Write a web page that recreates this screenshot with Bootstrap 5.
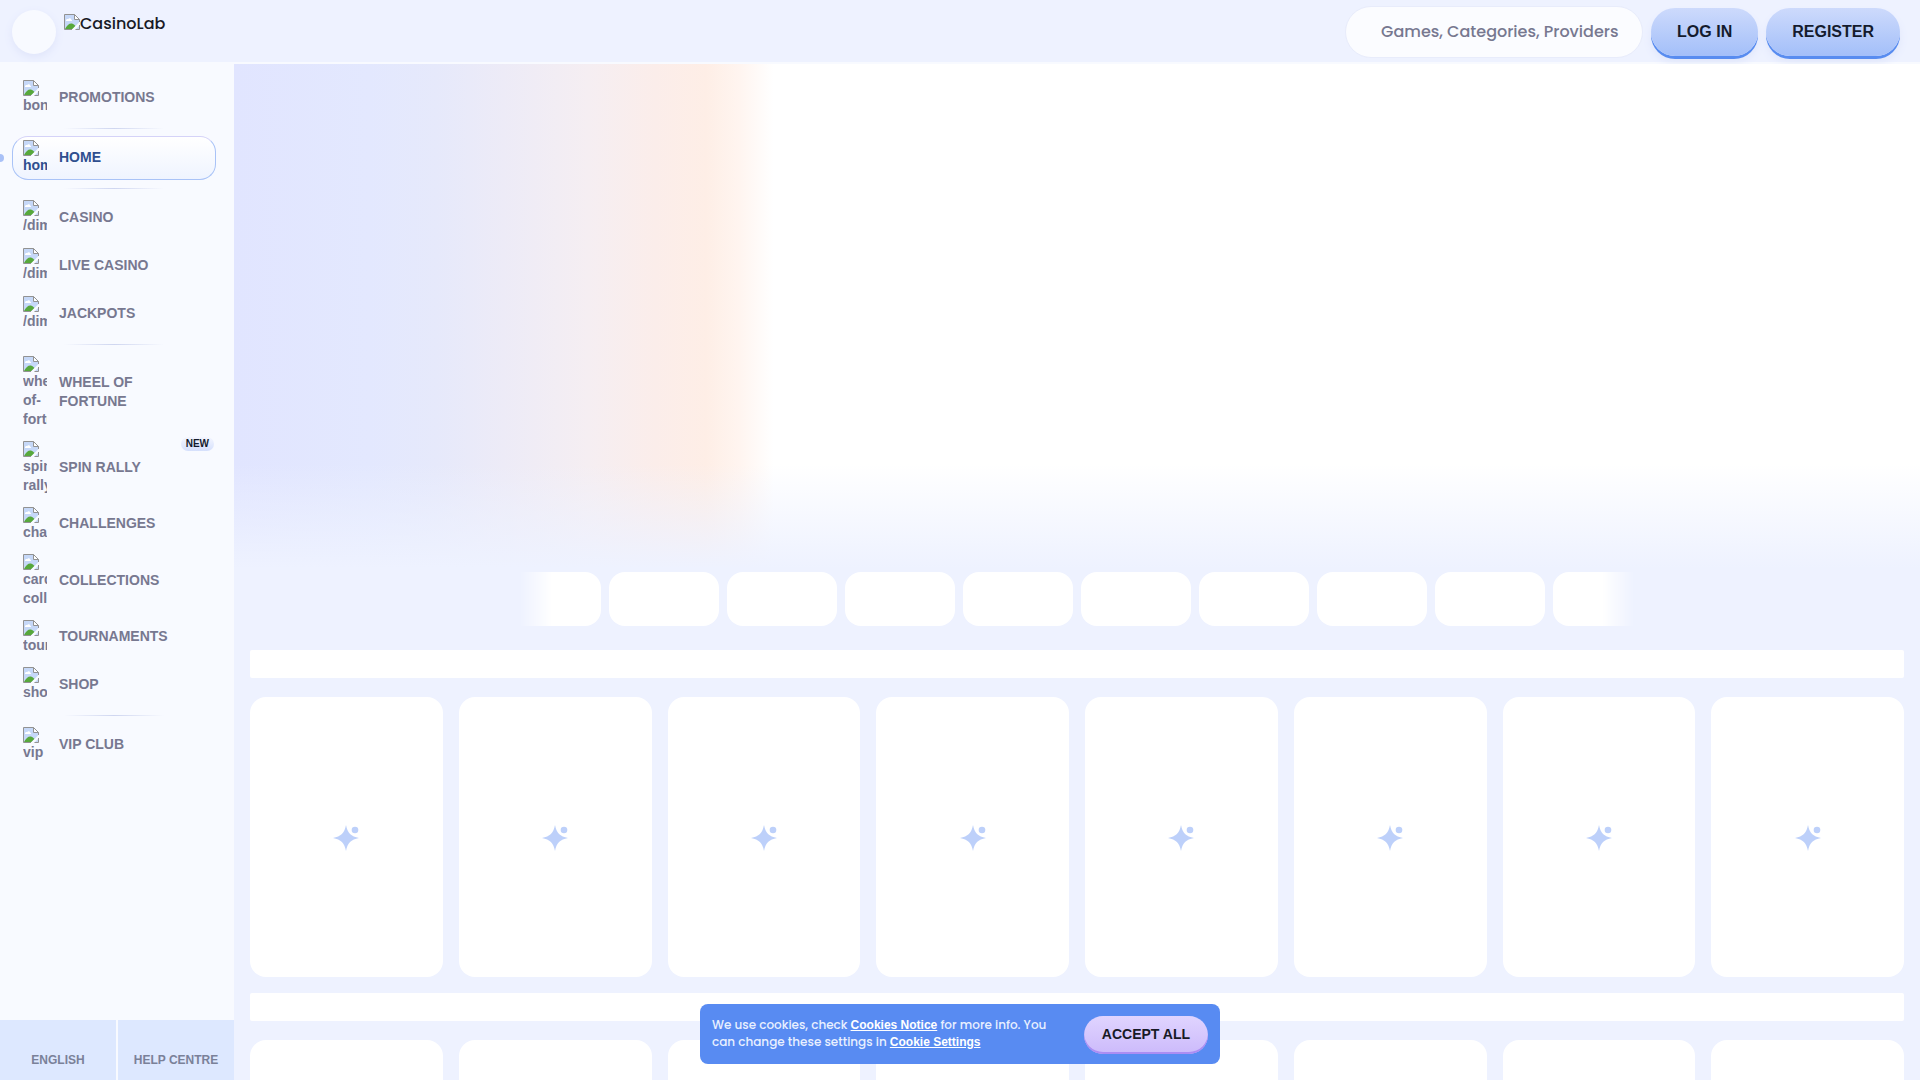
<!DOCTYPE html>
<html lang="en">
<head>
<meta charset="utf-8">
<meta name="viewport" content="width=device-width, initial-scale=1">
<title>CasinoLab</title>
<link rel="stylesheet" href="https://cdn.jsdelivr.net/npm/bootstrap@5.3.0/dist/css/bootstrap.min.css">
<style>
  :root { --geo: Poppins, Inter, "Open Sans", sans-serif; --page: #eef2ff; --muted: #777890; --ink: #181a26; }
  body { background: var(--page); color: var(--ink); font-family: "Liberation Sans", Arial, sans-serif; }
  .topbar { background: var(--page); border-bottom: 2px solid #f8faff; padding: 7px 20px 5px 12px; height: 64px; }
  .menu-btn { width: 44px; height: 44px; border-radius: 50%; border: 0; background: #f8faff; box-shadow: 0 3px 8px #dfe4fa; }
  .brand { font: 500 16px/20px var(--geo); color: var(--ink); text-decoration: none; padding-bottom: 16px; }
  .search-box { width: 298px; height: 52px; border: 1px solid #e8ecfb; border-radius: 26px; background: #fbfcff; padding: 0 16px 2px 35px; font: 500 16px/24px var(--geo); color: var(--muted); }
  .search-box::placeholder { color: var(--muted); opacity: 1; }
  .pill-btn { height: 48px; border: 0; border-radius: 25px; padding: 0 26px; font-weight: 700; font-size: 16px; color: #141b2d; background: linear-gradient(#cddafc, #a3bff9); box-shadow: 0 3px 0 #588cf0, 0 6px 8px #dfe5fa; }
  .sidebar { width: 234px; background: #f8faff; }
  .side-nav { padding: 12px 18px 0 12px; }
  .side-item { min-height: 44px; padding: 4px 11px; border-radius: 16px; color: var(--muted); font-weight: 700; font-size: 14px; line-height: 19px; text-decoration: none; margin-bottom: 4px; }
  .side-item.compact { min-height: 43px; }
  .side-item.current { color: #2f4f8f; border: 1px solid #a9c3f7; border-top-color: #d5d3f8; padding: 3px 10px; background: linear-gradient(#fff, #eff4ff); }
  .side-item.current::before { content: ""; position: absolute; left: -17px; top: 17px; width: 8px; height: 8px; border-radius: 50%; background: #a9c1f7; }
  .thumb { width: 24px; overflow: hidden; align-self: flex-start; }
  .thumb svg { display: block; }
  .side-label { width: 110px; padding-bottom: 2px; }
  .side-rule { height: 1px; margin: 4px 52px 7px; background: linear-gradient(90deg, transparent, #cfd6f0, transparent); }
  .new-tag { position: absolute; right: 2px; top: 0; font-size: 10px; line-height: 14px; padding: 0 5px; border-radius: 7px; color: #141b2d; background: linear-gradient(#f4f6ff, #d5e0fc); }
  .foot-row { gap: 2px; }
  .foot-link { flex: 1 1 0; height: 60px; padding: 30px 0 10px; background: #dde8ff; color: #7a8199; font-weight: 700; font-size: 12px; line-height: 20px; text-align: center; border: 0; text-decoration: none; }
  .hero { height: 508px; background: linear-gradient(transparent 400px, var(--page) 504px), linear-gradient(90deg, #e1e5ff 0, #e3e8fe 8%, #e6e9fb 12%, #edebf7 16%, #f5eef2 21%, #fbedea 25%, #feeee6 28%, #fff5f0 30%, #fff 32%); }
  .chips { width: 1116px; max-width: 100%; -webkit-mask-image: linear-gradient(90deg, transparent, #000 34px, #000 calc(100% - 34px), transparent); mask-image: linear-gradient(90deg, transparent, #000 34px, #000 calc(100% - 34px), transparent); }
  .chip { flex: 0 0 110px; height: 54px; border-radius: 16px; background: #fff; }
  .shelf-title { height: 28px; border-radius: 2px; background: #fff; margin-bottom: 19px; }
  .tiles { display: grid; grid-template-columns: repeat(8, 1fr); gap: 16px; margin-bottom: 16px; }
  .tile { height: 280px; border-radius: 16px; background: #fff; padding-top: 2px; }
  .cookie-bar { width: 520px; left: 50%; transform: translateX(-50%); bottom: 16px; min-height: 60px; border-radius: 8px; background: #588bf2; color: #e9f0ff; padding: 12px 12px 10px; z-index: 5; }
  .cookie-text { width: 346px; font: 500 12px/17px var(--geo); }
  .cookie-text a { color: #fff; font: 700 12px/12px "Liberation Sans", sans-serif; }
  .accept-btn { border: 0; border-radius: 20px; height: 38px; padding: 0 18px 2px; font-size: 14px; font-weight: 700; color: var(--ink); background: linear-gradient(#e0d4ff, #ccbafb); box-shadow: inset 0 -2px 0 #ab8df3; white-space: nowrap; }
</style>
<script src="https://cdn.jsdelivr.net/npm/bootstrap@5.3.0/dist/js/bootstrap.bundle.min.js"></script>
</head>
<body class="vh-100 overflow-hidden d-flex flex-column">
<svg width="0" height="0" class="position-absolute" aria-hidden="true">
  <symbol id="missing" viewBox="0 0 16 16">
    <path d="M.5.5h10l5 5v10H.5z" fill="#c6d8f8"/>
    <path d="M2 6.500c0-1.500 1.500-2 2.200-1.300C4.700 3.700 7 4 7 5.500c1 0 1.200 1 .8 1.500H2z" fill="#fff"/>
    <path d="M1 15c2-4 4.500-6 7-5.500 1.500.3 2.500 1.500 3.500 2.500L8.500 15z" fill="#57a83c"/>
    <path d="M16 7.500 7.500 16H11l5-5z" fill="#f8faff"/>
    <path d="M.5 15.500V.5h10l5 5V8M11.500 15.500h4V11M.5 15.500H8" fill="none" stroke="#929292"/>
    <path d="M10.500.5v5h5z" fill="#fff" stroke="#929292"/>
  </symbol>
  <symbol id="spark" viewBox="0 0 28 28">
    <path d="M14 1c1.500 8 5 11.500 13 13-8 1.500-11.500 5-13 13-1.500-8-5-11.500-13-13 8-1.500 11.500-5 13-13z" fill="#bdd0fa"/>
    <circle cx="23" cy="6" r="3.300" fill="#bdd0fa"/>
  </symbol>
</svg>

<header class="topbar d-flex align-items-center gap-2 flex-shrink-0">
  <button class="menu-btn" type="button" aria-label="Menu"></button>
  <a class="brand d-flex" href="#"><svg width="16" height="16"><use href="#missing"/></svg>CasinoLab</a>
  <input class="search-box ms-auto" type="text" placeholder="Games, Categories, Providers" aria-label="Search">
  <button class="pill-btn" type="button">LOG IN</button>
  <button class="pill-btn" type="button">REGISTER</button>
</header>

<div class="d-flex flex-grow-1 overflow-hidden">
  <aside class="sidebar d-flex flex-column flex-shrink-0">
    <nav class="side-nav d-flex flex-column flex-grow-1">
      <a class="side-item d-flex align-items-center gap-2 position-relative" href="#"><span class="thumb me-1"><svg width="16" height="16"><use href="#missing"/></svg>bonuses</span><span class="side-label">PROMOTIONS</span></a>
      <div class="side-rule"></div>
      <a class="side-item current d-flex align-items-center gap-2 position-relative" href="#" aria-current="page"><span class="thumb me-1"><svg width="16" height="16"><use href="#missing"/></svg>home</span><span class="side-label">HOME</span></a>
      <div class="side-rule"></div>
      <a class="side-item d-flex align-items-center gap-2" href="#"><span class="thumb me-1"><svg width="16" height="16"><use href="#missing"/></svg>/dim</span><span class="side-label">CASINO</span></a>
      <a class="side-item d-flex align-items-center gap-2" href="#"><span class="thumb me-1"><svg width="16" height="16"><use href="#missing"/></svg>/dim</span><span class="side-label">LIVE CASINO</span></a>
      <a class="side-item d-flex align-items-center gap-2" href="#"><span class="thumb me-1"><svg width="16" height="16"><use href="#missing"/></svg>/dim</span><span class="side-label">JACKPOTS</span></a>
      <div class="side-rule"></div>
      <a class="side-item compact d-flex align-items-center gap-2" href="#"><span class="thumb me-1"><svg width="16" height="16"><use href="#missing"/></svg>wheel-of-fortune</span><span class="side-label">WHEEL OF FORTUNE</span></a>
      <a class="side-item compact d-flex align-items-center gap-2 position-relative" href="#"><span class="thumb me-1"><svg width="16" height="16"><use href="#missing"/></svg>spin rally</span><span class="side-label">SPIN RALLY</span><span class="new-tag">NEW</span></a>
      <a class="side-item compact d-flex align-items-center gap-2" href="#"><span class="thumb me-1"><svg width="16" height="16"><use href="#missing"/></svg>challenges</span><span class="side-label">CHALLENGES</span></a>
      <a class="side-item compact d-flex align-items-center gap-2" href="#"><span class="thumb me-1"><svg width="16" height="16"><use href="#missing"/></svg>card collections</span><span class="side-label">COLLECTIONS</span></a>
      <a class="side-item compact d-flex align-items-center gap-2" href="#"><span class="thumb me-1"><svg width="16" height="16"><use href="#missing"/></svg>tournaments</span><span class="side-label">TOURNAMENTS</span></a>
      <a class="side-item d-flex align-items-center gap-2" href="#"><span class="thumb me-1"><svg width="16" height="16"><use href="#missing"/></svg>shop</span><span class="side-label">SHOP</span></a>
      <div class="side-rule"></div>
      <a class="side-item d-flex align-items-center gap-2" href="#"><span class="thumb me-1"><svg width="16" height="16"><use href="#missing"/></svg>vip</span><span class="side-label">VIP CLUB</span></a>
    </nav>
    <div class="foot-row d-flex">
      <button class="foot-link" type="button">ENGLISH</button>
      <a class="foot-link" href="#">HELP CENTRE</a>
    </div>
  </aside>

  <main class="flex-grow-1 overflow-hidden">
    <section class="hero"></section>
    <div class="chips d-flex justify-content-center gap-2 overflow-hidden mx-auto mb-4">
      <div class="chip"></div><div class="chip"></div><div class="chip"></div><div class="chip"></div><div class="chip"></div>
      <div class="chip"></div><div class="chip"></div><div class="chip"></div><div class="chip"></div><div class="chip"></div>
    </div>
    <div class="px-3">
      <div class="shelf-title"></div>
      <div class="tiles"></div>
      <div class="shelf-title"></div>
      <div class="tiles"></div>
    </div>
  </main>
</div>

<div class="cookie-bar position-fixed d-flex justify-content-between" role="dialog" aria-label="Cookies">
  <div class="cookie-text">We use cookies, check <a href="#">Cookies Notice</a> for more info. You can change these settings in <a href="#">Cookie Settings</a></div>
  <button class="accept-btn" type="button">ACCEPT ALL</button>
</div>
<script>
  document.querySelectorAll('.tiles').forEach(function (row) {
    row.innerHTML = '<div class="tile d-flex align-items-center justify-content-center"><svg width="28" height="28"><use href="#spark"/></svg></div>'.repeat(8);
  });
</script>
</body>
</html>
